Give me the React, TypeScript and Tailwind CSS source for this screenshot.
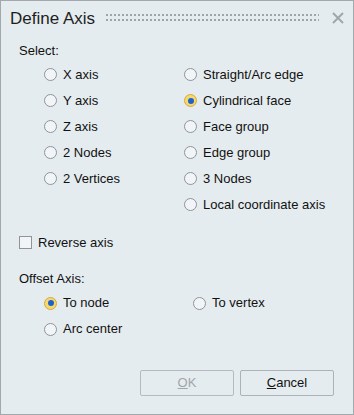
import React from "react";

function Radio({ checked }: { checked?: boolean }) {
  return checked ? (
    <span className="w-[13px] h-[13px] rounded-full border border-[#d9a93c] bg-[#f6d870] flex items-center justify-center shrink-0">
      <span className="w-[6px] h-[6px] rounded-full bg-[#1c62cc]" />
    </span>
  ) : (
    <span className="w-[13px] h-[13px] rounded-full border border-[#8f9499] bg-[#f2f5f7] shrink-0" />
  );
}

function Option({ label, checked }: { label: string; checked?: boolean }) {
  return (
    <div className="h-[26px] flex items-center gap-[6px]">
      <Radio checked={checked} />
      <span>{label}</span>
    </div>
  );
}

const leftItems = ["X axis", "Y axis", "Z axis", "2 Nodes", "2 Vertices"];
const rightItems = [
  "Straight/Arc edge",
  "Cylindrical face",
  "Face group",
  "Edge group",
  "3 Nodes",
  "Local coordinate axis",
];

export default function App() {
  return (
    <div
      className="w-[354px] h-[415px] bg-[#e5ecef] border border-[#a3a8ad] text-[13px] text-[#111] flex flex-col"
      style={{ fontFamily: '"Liberation Sans", Arial, sans-serif' }}
    >
      <div className="h-[36px] flex items-center pl-[9px] pr-[9px] gap-[11px]">
        <span className="text-[17px] text-[#1e1e1e]">Define Axis</span>
        <svg className="flex-1 h-[7px] mt-[-4px]">
          <defs>
            <pattern id="grip" width="4" height="5" patternUnits="userSpaceOnUse">
              <rect width="2" height="2" fill="#9ea4aa" />
            </pattern>
          </defs>
          <rect width="100%" height="7" fill="url(#grip)" />
        </svg>
        <svg width="12" height="12" viewBox="0 0 12 12" className="ml-[2px] mt-[-2px]">
          <path d="M1 1 L11 11 M11 1 L1 11" stroke="#a0a6ac" strokeWidth="2" />
        </svg>
      </div>

      <div className="pl-[18px] pt-[4px]">Select:</div>

      <div className="flex pt-[1px]">
        <div className="w-[183px] pl-[43px] flex flex-col">
          {leftItems.map((l) => (
            <Option key={l} label={l} />
          ))}
        </div>
        <div className="flex flex-col">
          {rightItems.map((l, i) => (
            <Option key={l} label={l} checked={i === 1} />
          ))}
        </div>
      </div>

      <div className="pl-[18px] mt-[18px] flex items-center gap-[6px] h-[14px]">
        <span className="w-[13px] h-[13px] border border-[#8f9499] bg-[#f2f5f7]" />
        <span>Reverse axis</span>
      </div>

      <div className="pl-[18px] mt-[19px]">Offset Axis:</div>

      <div className="pl-[43px] mt-[2px] flex flex-col">
        <div className="flex">
          <div className="w-[149px]">
            <Option label="To node" checked />
          </div>
          <Option label="To vertex" />
        </div>
        <Option label="Arc center" />
      </div>

      <div className="flex-1" />

      <div className="flex justify-end gap-[6px] pr-[19px] pb-[18px]">
        <button className="w-[94px] h-[26px] border border-[#b5babe] bg-[#e5ecef] text-[#a0a6ab] rounded-[2px]">
          <span className="underline">O</span>K
        </button>
        <button className="w-[94px] h-[26px] border border-[#adb2b7] bg-[#e5ecef] text-[#111] rounded-[2px]">
          <span className="underline">C</span>ancel
        </button>
      </div>
    </div>
  );
}
